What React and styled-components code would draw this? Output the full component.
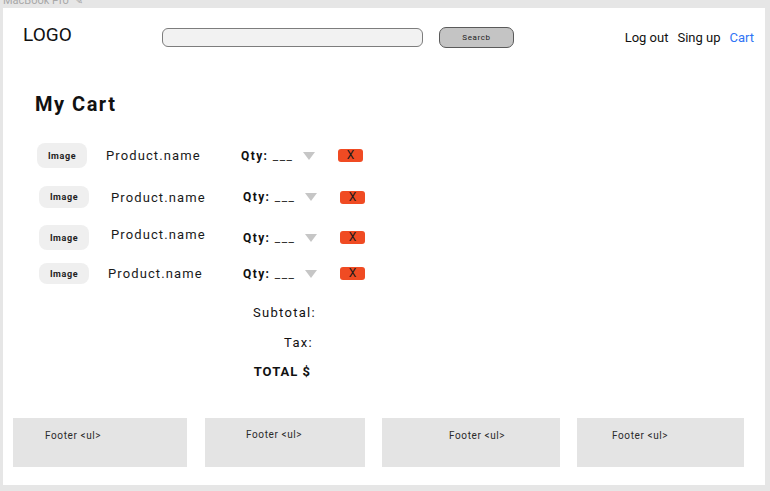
import React from "react";
import styled, { createGlobalStyle } from "styled-components";

const Global = createGlobalStyle`
  html, body { margin: 0; padding: 0; background: #e6e6e6; }
  body { font-family: Roboto, "Liberation Sans", Arial, sans-serif; color: #1a1a1a; }
  * { box-sizing: border-box; }
`;

const Caption = styled.div`
  height: 8px;
  overflow: hidden;
  padding-left: 3px;
  font-size: 11px;
  line-height: 2px;
  color: #a8a8a8;
  white-space: nowrap;
`;

const Panel = styled.div`
  margin-left: 3px;
  width: 762px;
  height: 477px;
  background: #ffffff;
  display: flex;
  flex-direction: column;
  padding-bottom: 18px;
`;

const Header = styled.header`
  height: 58px;
  display: flex;
  align-items: center;
  padding: 0 11px 0 20px;
`;

const Logo = styled.div`
  flex: 0 0 139px;
  font-size: 19px;
  margin-bottom: 5px;
  color: #111;
`;

const SearchInput = styled.div`
  width: 261px;
  height: 19px;
  border: 1px solid #7d7d7d;
  border-radius: 6px;
  background: #f2f2f2;
`;

const SearchButton = styled.button`
  margin-left: 16px;
  width: 75px;
  height: 21px;
  border: 1px solid #5a5a5a;
  border-radius: 7px;
  background: #c4c4c4;
  font-family: Roboto, sans-serif;
  font-size: 8px;
  letter-spacing: 0.6px;
  color: #222;
  padding: 0;
  margin-top: 1px;
`;

const Nav = styled.nav`
  margin-left: auto;
  display: flex;
  gap: 9px;
  font-size: 13px;
`;

const NavLink = styled.span`
  color: ${(p) => (p.$active ? "#2f74f5" : "#111")};
`;

const Main = styled.main`
  padding: 26px 0 0 32px;
  display: flex;
  flex-direction: column;
`;

const Title = styled.h1`
  margin: 0 0 19.5px;
  font-size: 20px;
  line-height: 24px;
  font-weight: 700;
  letter-spacing: 1.5px;
  color: #111;
`;

const Row = styled.div`
  height: ${(p) => p.$h}px;
  display: flex;
  align-items: center;
`;

const ImageBox = styled.div`
  margin-left: ${(p) => p.$x}px;
  flex: 0 0 50px;
  height: ${(p) => p.$ih}px;
  border-radius: 8px;
  background: #efefef;
  display: flex;
  align-items: center;
  justify-content: center;
  font-size: 9px;
  font-weight: 700;
  letter-spacing: 0.6px;
  color: #222;
`;

const Name = styled.div`
  flex: 0 0 154px;
  padding-left: ${(p) => p.$pl}px;
  font-size: 13px;
  letter-spacing: 1.1px;
  color: #1a1a1a;
  margin-top: ${(p) => p.$dy}px;
`;

const Qty = styled.div`
  flex: 0 0 62px;
  font-size: 12px;
  font-weight: 700;
  letter-spacing: 1.4px;
  color: #111;
  white-space: nowrap;
`;

const Blank = styled.span`
  font-weight: 400;
  color: #333;
  letter-spacing: 1.5px;
`;

const Caret = styled.div`
  width: 0;
  height: 0;
  border-left: 6.5px solid transparent;
  border-right: 6.5px solid transparent;
  border-top: 8px solid #c6c6c6;
  margin-right: 23px;
`;

const Remove = styled.div`
  width: 25px;
  height: 13px;
  border-radius: 3px;
  background: #f04b23;
  color: #1a1a1a;
  font-size: 12px;
  line-height: 13px;
  text-align: center;
`;

const Summary = styled.div`
  width: 281px;
  margin-top: 14px;
  display: flex;
  flex-direction: column;
  align-items: flex-end;
  gap: ${(p) => p.$gap}px;
`;

const SumLine = styled.div`
  height: 16px;
  line-height: 16px;
  font-size: 13px;
  letter-spacing: ${(p) => (p.$bold ? 1 : 1.3)}px;
  font-weight: ${(p) => (p.$bold ? 700 : 400)};
  padding-right: ${(p) => p.$pr}px;
  margin-top: ${(p) => p.$mt || 0}px;
  color: #111;
`;

const Footer = styled.footer`
  margin-top: auto;
  padding-left: 10px;
  display: flex;
`;

const FooterBox = styled.div`
  width: ${(p) => p.$w}px;
  margin-right: ${(p) => p.$mr}px;
  height: 49px;
  background: #e4e4e4;
  padding: ${(p) => p.$pt}px 0 0 ${(p) => p.$pl}px;
  font-size: 10px;
  line-height: 12px;
  letter-spacing: 0.6px;
  color: #2a2a2a;
`;

const items = [
  { h: 40, x: 2, ih: 25, npl: 19, dy: 0 },
  { h: 43, x: 4, ih: 22, npl: 22, dy: 0 },
  { h: 38, x: 4, ih: 25, npl: 22, dy: -6 },
  { h: 34, x: 4, ih: 21, npl: 19, dy: -1 },
];

const footers = [
  { w: 174, mr: 18, pl: 32, pt: 12 },
  { w: 160, mr: 17, pl: 41, pt: 11 },
  { w: 178, mr: 17, pl: 67, pt: 12 },
  { w: 167, mr: 0, pl: 35, pt: 12 },
];

export default function App() {
  return (
    <>
      <Global />
      <Caption>MacBook Pro &nbsp;✎</Caption>
      <Panel>
        <Header>
          <Logo>LOGO</Logo>
          <SearchInput />
          <SearchButton>Searcb</SearchButton>
          <Nav>
            <NavLink>Log out</NavLink>
            <NavLink>Sing up</NavLink>
            <NavLink $active>Cart</NavLink>
          </Nav>
        </Header>
        <Main>
          <Title>My Cart</Title>
          {items.map((it, i) => (
            <Row key={i} $h={it.h}>
              <ImageBox $x={it.x} $ih={it.ih}>Image</ImageBox>
              <Name $pl={it.npl} $dy={it.dy}>
                Product.name
              </Name>
              <Qty>
                Qty: <Blank>___</Blank>
              </Qty>
              <Caret />
              <Remove>X</Remove>
            </Row>
          ))}
          <Summary $gap={14}>
            <SumLine $pr={0}>Subtotal:</SumLine>
            <SumLine $pr={3}>Tax:</SumLine>
            <SumLine $pr={5} $bold $mt={-1}>TOTAL $</SumLine>
          </Summary>
        </Main>
        <Footer>
          {footers.map((f, i) => (
            <FooterBox key={i} $w={f.w} $mr={f.mr} $pl={f.pl} $pt={f.pt}>
              Footer &lt;ul&gt;
            </FooterBox>
          ))}
        </Footer>
      </Panel>
    </>
  );
}
